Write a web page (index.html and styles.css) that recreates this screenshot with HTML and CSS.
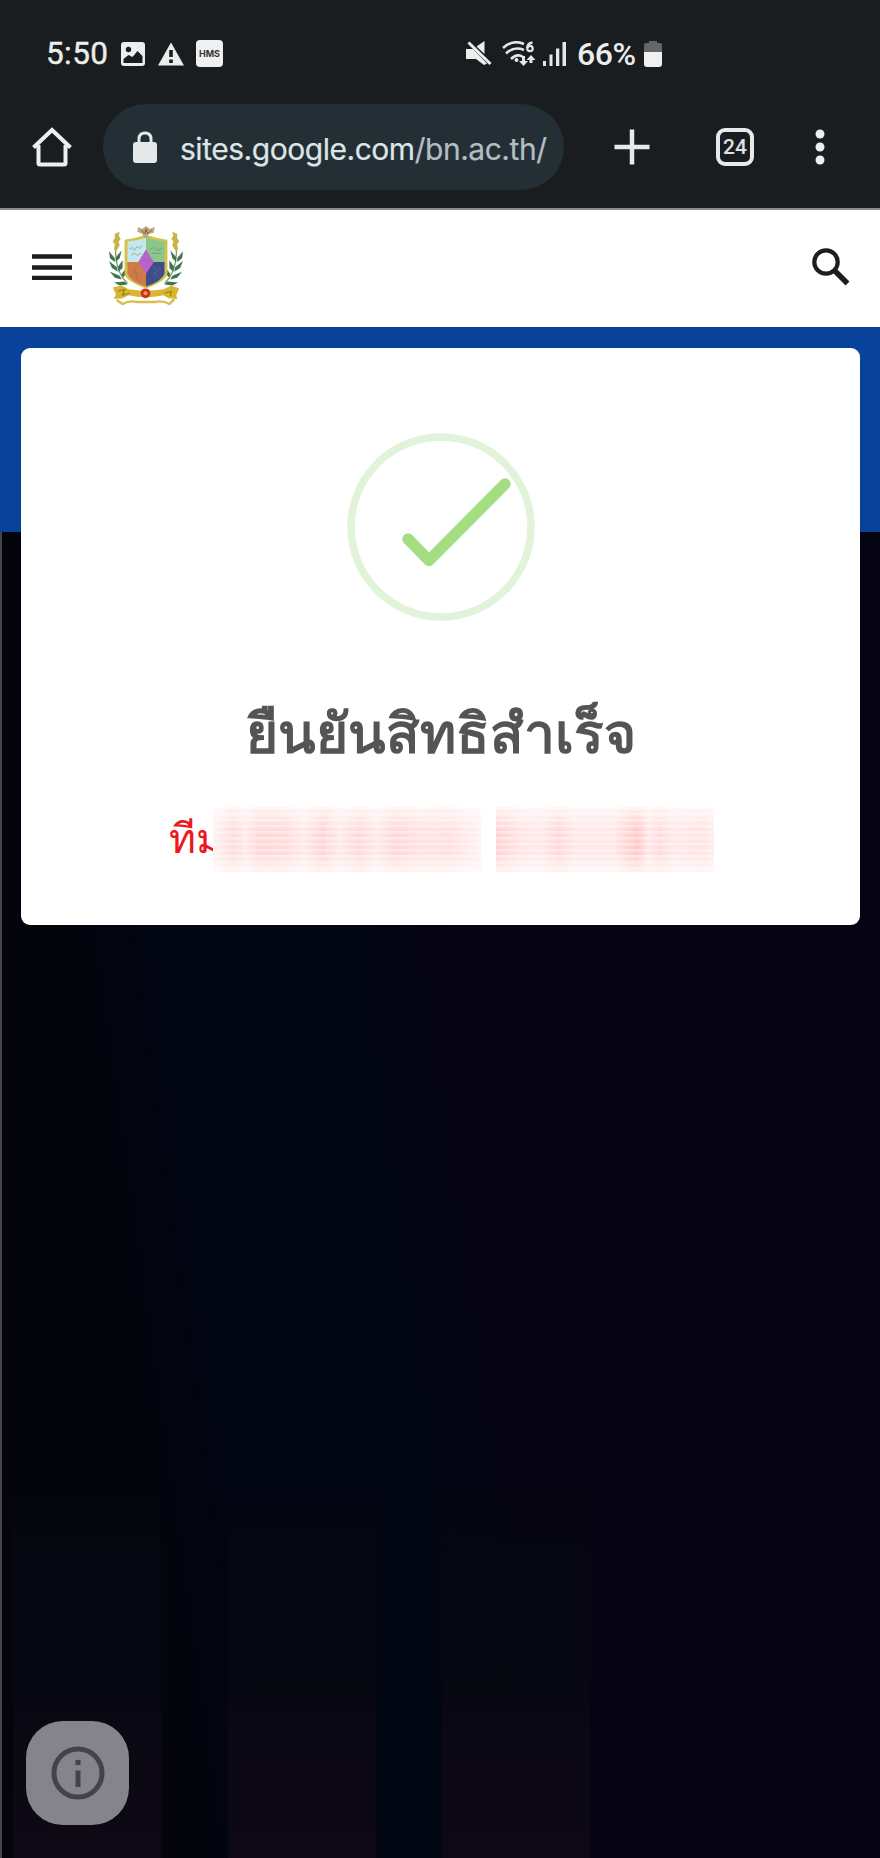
FILE: index.html
```html
<!DOCTYPE html>
<html lang="th">
<head>
<meta charset="utf-8">
<title>sites.google.com/bn.ac.th</title>
<link rel="stylesheet" href="styles.css">
</head>
<body>
<div class="phone">
  <div class="status">
    <span class="clock">5:50</span>
    <svg class="i-image" width="24" height="24" viewBox="0 0 24 24"><rect width="24" height="24" rx="3" fill="#eceded"/><circle cx="7.5" cy="7.5" r="2.7" fill="#1a1d20"/><path d="M2.500 21v-4l5-4 4 2 5-6 5 5v7z" fill="#1a1d20"/></svg>
    <svg class="i-warn" width="26" height="24" viewBox="0 0 26 24"><path d="M13 .5 26 23.5H0z" fill="#eceded"/><path d="M13 8v7M13 17.500v3.500" stroke="#1a1d20" stroke-width="3.600"/></svg>
    <span class="hms">HMS</span>
    <svg class="i-mute" width="26" height="25" viewBox="0 0 26 25"><path d="M0 8h7l14 14.500-3 1.500-8-6H0zM10.500 5.500 18.500 0v13z" fill="#eceded"/><path d="M2.500 1.500 24.500 23" stroke="#eceded" stroke-width="3"/></svg>
    <svg class="i-wifi" width="34" height="26" viewBox="0 0 34 26"><g fill="none" stroke="#e4e6e7" stroke-width="2.500"><path d="M1 7Q11-2 22 3M4 12.500Q12 5 22 9M9 18q6-6 12-2"/><path d="M30.500 1.500Q25.500 2 25.300 7"/><circle cx="28" cy="7.500" r="2.700" stroke-width="2.200"/></g><circle cx="14.500" cy="19" r="2" fill="#e4e6e7"/><path d="M20 15h3v5h3l-4.500 5-4.500-5h3zM29 14l4.500 5h-3v3h-3v-3h-3z" fill="#e4e6e7"/></svg>
    <svg class="i-signal" width="24" height="24" viewBox="0 0 24 24" fill="#e4e6e7"><path d="M0 19h3v5H0zM6.500 12.500h3V24h-3zM13 6.500h3.300V24H13zM19.500 0H23v24h-3.500z"/></svg>
    <span class="percent">66%</span>
    <svg class="i-batt" width="18" height="26" viewBox="0 0 18 26"><path d="M0 11V4q0-2 2-2h3V0h8v2h3q2 0 2 2v7z" fill="#636568"/><path d="M0 11h18v12q0 3-3 3H3q-3 0-3-3z" fill="#f0f0f0"/></svg>
  </div>
  <div class="toolbar">
    <svg class="home" width="40" height="40" viewBox="0 0 40 40" fill="none" stroke="#eceeef" stroke-width="4"><path d="M1.500 20.500 20 3l18.500 17.500M6.500 18v18q0 1.500 1.500 1.500h24q1.500 0 1.500-1.500V18"/></svg>
    <div class="address">
      <svg width="24" height="32" viewBox="0 0 24 32"><rect y="11" width="24" height="21" rx="3" fill="#e4e8ea"/><path d="M6 12V8q0-6 6-6t6 6v4" fill="none" stroke="#e4e8ea" stroke-width="3"/></svg>
      <span class="url">sites.google.com<span class="path">/bn.ac.th/</span></span>
    </div>
    <svg class="plus" width="36" height="36" viewBox="0 0 36 36"><path d="M18 .5v35M.5 18h35" stroke="#e7e9ea" stroke-width="4.500"/></svg>
    <span class="tabs">24</span>
    <svg class="dots" width="10" height="36" viewBox="0 0 10 36" fill="#eceeef"><circle cx="5" cy="5" r="4.500"/><circle cx="5" cy="18" r="4.500"/><circle cx="5" cy="31" r="4.500"/></svg>
  </div>
  <div class="site-header">
    <svg class="menu" width="40" height="26" viewBox="0 0 40 26"><path d="M0 2.500h40M0 13.500h40M0 24h40" stroke="#1c1d1f" stroke-width="4.600"/></svg>
    <svg class="crest" width="76" height="82" viewBox="0 0 78 82">
      <g fill="none" stroke="#8aa06a" stroke-width="1.400"><path d="M9 12Q4 45 20 60M69 12Q74 45 58 60"/></g>
      <g fill="#c9b44a"><path d="m7 9 5-2-1 4 2 3-2 3 1 4-3 5-3-1 1-5-2-3 2-4zM71 9l-5-2 1 4-2 3 2 3-1 4 3 5 3-1-1-5 2-3-2-4z"/></g>
      <g fill="#3f7652"><path d="m7 34-6-7 1 7 5 4zM9 43l-8-6 3 7 6 4zM12 52l-10-4 5 6 7 2zM17 58l-11 1 6 3 8-1zM8 33l6-7-2 8-4 4zM10 43l5-7 0 8-4 4zM14 50l4-5v6l-3 3zM71 34l6-7-1 7-5 4zM69 43l8-6-3 7-6 4zM66 52l10-4-5 6-7 2zM61 58l11 1-6 3-8-1zM70 33l-6-7 2 8 4 4zM68 43l-5-7v8l4 4zM64 50l-4-5v6l3 3z"/></g>
      <path d="M17 15q11-1 22-5 11 4 22 5v35q-2 8-22 15-20-7-22-15z" fill="#d5c04b"/>
      <path d="M20 17q10-1 19-4v25H20z" fill="#c3e9ec"/><path d="M39 13q9 3 19 4v21H39z" fill="#89c78a"/>
      <path d="M20 38h19v25q-16-5-19-13z" fill="#d07a48"/><path d="M39 38h19v12q-3 8-19 13z" fill="#3e4d8c"/>
      <path d="m39 25 8 13-8 12-8-12z" fill="#bd62c8"/>
      <path d="m22 25 3-2 2 3 3-4 3 2 2-3M24 31l3-2 3 2 4-2M43 25l4-2 3 3 5-2M45 29h9M29 42l-3 6 4 1-1 6 4 2M46 43l5 4-4 3 6 4M51 43l3 3M35 37l4-2 4 3" fill="none" stroke="#6d7d72" stroke-width=".8" opacity=".7"/>
      <path d="m31 2 4 2 4-3 4 3 5-2-1 6-5 1-2 4h-3l-2-4-5-2z" fill="#c3a680"/><path d="m34 5 4 4 1-5 2 5 4-4" fill="none" stroke="#7d5e47"/>
      <path d="m5 64 9-2 7 4q18 3 36 0l8-4 8 3-3 7 1 4-9-1-5-3q-18 4-36 0l-6 3-9 1 2-5z" fill="#d9b532"/>
      <path d="m9 77 6 4q7-4 15-2h18q8-2 15 2l5-5" fill="none" stroke="#d7bd50" stroke-width="2.500"/>
      <path d="m10 68 7-2-2 6 7-2M58 70l7-2-1 5" fill="none" stroke="#9b7c24" stroke-width="1.200"/>
      <circle cx="38.500" cy="70" r="5" fill="#ce3022"/><circle cx="38.500" cy="70" r="2" fill="#efa545"/>
    </svg>
    <svg class="search" width="40" height="40" viewBox="0 0 40 40" fill="none" stroke="#1c1d1f"><circle cx="15" cy="15" r="11.700" stroke-width="4.200"/><path d="m23.500 23.500 13 13" stroke-width="5.500"/></svg>
  </div>
  <div class="page">
    <div class="card">
      <svg class="success" width="188" height="188" viewBox="0 0 188 188" fill="none"><circle cx="94" cy="94" r="90" stroke="#e1f3d8" stroke-width="7.500"/><path d="m61 106 21 21.500L158 51" stroke="#a4de83" stroke-width="11.500" stroke-linecap="round" stroke-linejoin="round"/></svg>
      <h1>ยืนยันสิทธิสำเร็จ</h1>
      <div class="team"><span class="name">ทีม</span><i class="mask first"></i><i class="mask second"></i></div>
    </div>
    <div class="columns"><i></i><i></i><i></i></div>
    <div class="info"><svg width="54" height="54" viewBox="0 0 54 54"><circle cx="27" cy="27" r="24" fill="none" stroke="#434448" stroke-width="5"/><path d="M27 14v5M27 24.500v16.500" stroke="#434448" stroke-width="5"/></svg></div>
  </div>
</div>
</body>
</html>
```
FILE: styles.css
```css
* { box-sizing: border-box; }
body { margin: 0; font-family: Roboto, "Noto Sans", sans-serif; }
svg { display: block; flex: none; }
.phone { width: 880px; height: 1858px; display: flex; flex-direction: column; overflow: hidden; background: #1a1d20; }
.status { height: 104px; padding: 3px 0 0 46px; display: flex; align-items: center; color: #eceded; }
.clock { width: 75px; font-size: 31.5px; letter-spacing: .4px; -webkit-text-stroke: .4px #eceded; }
.clock, .percent { line-height: 38px; white-space: nowrap; }
.i-warn { margin-left: 13px; }
.hms { width: 27px; height: 27px; margin-left: 12px; border-radius: 4px; background: #f0f0f0; color: #333; font: bold 9px/27px Inter, sans-serif; text-align: center; }
.i-mute { margin-left: 243px; }
.i-wifi { margin-left: 10px; }
.i-signal { margin-left: 7px; }
.percent { width: 67px; margin-left: 10px; font-size: 32px; font-weight: 500; letter-spacing: -.4px; }
.toolbar { height: 106px; display: flex; align-items: flex-start; padding-left: 32px; border-bottom: 2px solid #8b8c8e; }
.home { margin-top: 23px; }
.address { width: 461px; height: 86px; margin-left: 31px; padding-left: 30px; border-radius: 43px; display: flex; align-items: center; background: #232f35; }
.url { margin: 3px 0 0 23px; font: 30px/40px Inter, sans-serif; letter-spacing: -.47px; color: #dde5e8; white-space: nowrap; -webkit-text-stroke: .2px; }
.path { color: #b3bec3; }
.plus { margin: 25px 0 0 50px; }
.tabs { width: 38px; height: 38px; margin: 24px 0 0 66px; border: 4px solid #e7e9ea; border-radius: 9px; color: #dfe2e4; font: 500 21px/30px Roboto, sans-serif; text-align: center; }
.dots { margin: 25px 0 0 61px; }
.site-header { height: 117px; padding: 0 20px 0 32px; display: flex; align-items: center; background: #fff; }
.menu { margin-top: -3px; }
.crest { margin-left: 36px; margin-top: -7px; }
.search { margin: -3px 9px 0 auto; }
.page { position: relative; flex: 1; padding: 21px 20px 0 21px; background:
  linear-gradient(#08429a, #08429a) 0 0 / 100% 205px no-repeat,
  linear-gradient(#45444d, #45444d) 0 205px / 2px 100% no-repeat,
  linear-gradient(82deg, #03040c 0 18%, #020512 25% 45%, #060312 53% 100%); }
.card { position: relative; z-index: 1; height: 577px; border-radius: 9px; background: #fff; padding-top: 85px; display: flex; flex-direction: column; align-items: center; }
h1 { height: 80px; margin: 62px 0 0; color: #545454; font-size: 55px; line-height: 103px; font-weight: 600; white-space: nowrap; }
.team { width: 545px; height: 65px; margin: 44px 0 0 2px; display: flex; align-items: center; }
.name { width: 44px; color: #ee171b; font-size: 41px; line-height: 65px; font-weight: 300; white-space: nowrap; }
.mask { position: relative; height: 65px; }
.first { width: 268px; background: repeating-linear-gradient(#fff6 0 2px, #fff0 3px 6px), linear-gradient(#fffb, #fff3 35% 70%, #fffb), linear-gradient(90deg, #ffefef, #ffd2d2 8%, #ffe5e5 12%, #ffcfcf 17%, #ffd2d2 27%, #ffe5e5 34%, #ffcaca 41%, #ffe4e4 47%, #ffd0d0 55%, #ffe5e5 61%, #ffcece 68%, #ffdcdc 77%, #ffd8d8 88%, #fff0f0); }
.second { width: 218px; margin-left: 15px; background: repeating-linear-gradient(#fff6 0 2px, #fff0 3px 6px), linear-gradient(#fffb, #fff3 35% 70%, #fffb), linear-gradient(90deg, #ffc8c8, #ffe0e0 12%, #ffe5e5 20%, #ffcfcf 29%, #ffe2e2 36%, #ffe2e2 54%, #ffbdb7 65%, #ffe2e2 70%, #ffd2d2 75%, #ffe4e4 82%, #ffdcdc 95%, #ffe8e8); }
.columns { position: absolute; left: 13px; bottom: 0; width: 577px; height: 370px; display: flex; justify-content: space-between; }
.columns i { width: 148px; background: linear-gradient(#06071000, #060710 20% 50%, #0a0813 65%, #0d0814); }
.info { position: absolute; left: 26px; bottom: 33px; width: 103px; height: 104px; border-radius: 37px; background: #85838b; display: flex; align-items: center; justify-content: center; }
```
